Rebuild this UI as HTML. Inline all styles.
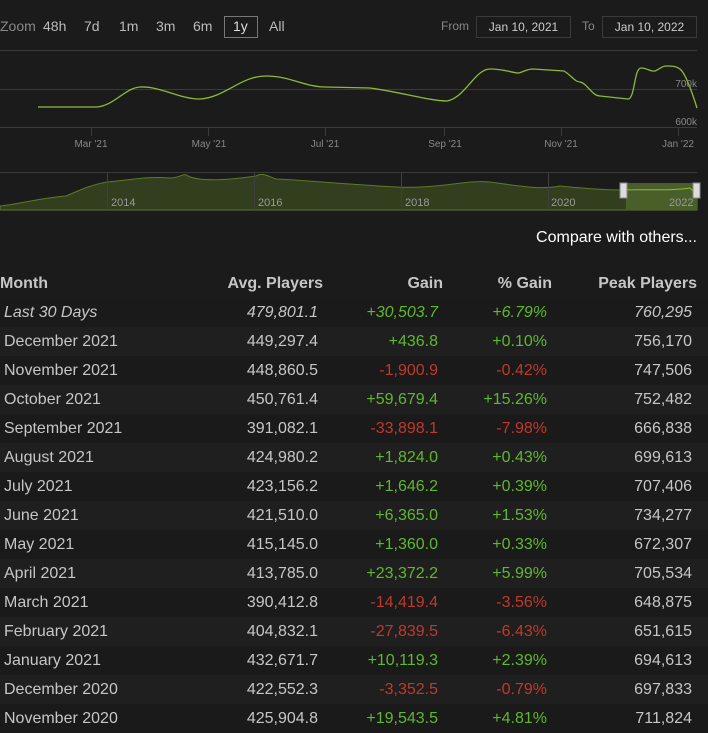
<!DOCTYPE html>
<html><head><style>
*{margin:0;padding:0;box-sizing:border-box}
body{width:708px;height:731px;background:#1b1b1b;font-family:"Liberation Sans",sans-serif;overflow:hidden;position:relative;color:#c6c6c6}
.a{position:absolute;white-space:nowrap}
.zb{font-size:14px;color:#bbb;top:18px}
.db{position:absolute;top:16px;height:22px;border:1px solid #3a3a3a;font-size:12px;color:#ccc;text-align:center;line-height:20px}
table{position:absolute;top:270px;left:0;width:708px;border-collapse:collapse;font-size:16px}
td,th{height:29px;padding:0;white-space:nowrap}
th{height:28px;font-weight:bold;color:#c6c6c6;text-align:right;background:#1b1b1b}
tr:nth-child(odd) td{background:#1f1f1f}
tr:nth-child(even) td{background:#1a1a1a}
td{text-align:right;color:#c6c6c6;padding-right:5px!important}
td.m{text-align:left;padding-left:4px}
.g{color:#5fb82e}.r{color:#c0392b}
i{font-style:italic}
</style></head><body>
<div class="a zb" style="left:0;color:#888">Zoom</div>
<div class="a zb" style="left:43px">48h</div>
<div class="a zb" style="left:84px">7d</div>
<div class="a zb" style="left:119px">1m</div>
<div class="a zb" style="left:156px">3m</div>
<div class="a zb" style="left:193px">6m</div>
<div class="a" style="left:224px;top:16px;width:34px;height:22px;border:1px solid #777;"></div>
<div class="a zb" style="left:233px;color:#ddd">1y</div>
<div class="a zb" style="left:269px">All</div>
<div class="a" style="left:441px;top:19px;font-size:12px;color:#888">From</div>
<div class="db" style="left:476px;width:95px">Jan 10, 2021</div>
<div class="a" style="left:582px;top:19px;font-size:12px;color:#888">To</div>
<div class="db" style="left:602px;width:95px">Jan 10, 2022</div>
<svg class="a" style="left:0;top:0" width="708" height="250">
<g stroke="#3a3a3a" stroke-width="1">
<line x1="0" y1="50.5" x2="697" y2="50.5"/><line x1="0" y1="89.5" x2="697" y2="89.5"/><line x1="0" y1="127.5" x2="697" y2="127.5"/>
<line x1="91.5" y1="128" x2="91.5" y2="136"/><line x1="208.5" y1="128" x2="208.5" y2="136"/><line x1="325.5" y1="128" x2="325.5" y2="136"/><line x1="444.5" y1="128" x2="444.5" y2="136"/><line x1="561.5" y1="128" x2="561.5" y2="136"/><line x1="678.5" y1="128" x2="678.5" y2="136"/>
</g>
<path d="M38,107 L97,107 C115,105 125,88 140,87 C160,86 180,99 199,99 C225,98 240,76 266,76 C290,76 305,87 325,87 L370,88 C400,92 430,101 447,101 C465,98 475,69 490,69 C505,69 512,73 519,73 C525,71 528,69 533,69 L564,71 C572,76 575,82 580,82 C587,83 592,96 600,96 L628,99 C635,99 634,68 641,68 C648,68 650,72 655,71 C660,69 662,66 666,66 C672,66 677,66 681,70 C686,75 692,92 697,108" fill="none" stroke="#8fb83a" stroke-width="1.3"/>
<g fill="#888" font-size="10" font-family="Liberation Sans" text-anchor="middle">
<text x="91" y="147">Mar '21</text><text x="209" y="147">May '21</text><text x="325" y="147">Jul '21</text><text x="445" y="147">Sep '21</text><text x="561" y="147">Nov '21</text><text x="678" y="147">Jan '22</text>
<text x="697" y="87" text-anchor="end">700k</text><text x="697" y="125" text-anchor="end">600k</text>
</g>
<line x1="0" y1="172.5" x2="697" y2="172.5" stroke="#3a3a3a"/>
<path d="M0,210 L0,206 C20,204 40,198 66,196 C80,190 90,185 107,182 C130,180 150,176 170,178 C180,178 184,172 188,176 C200,182 230,180 256,176 C262,172 268,176 276,179 C300,180 320,182 350,184 C380,186 400,188 420,187 C450,186 470,180 490,182 C520,186 540,190 560,186 C580,188 600,190 626,190 L697,190 L697,210 Z" fill="#333e1f" stroke="#5a7a28" stroke-width="1"/>
<rect x="626" y="183" width="71" height="27" fill="#4a5e2a"/>
<path d="M626,190 C650,189 670,191 690,188 L697,195" stroke="#8fb83a" fill="none"/>
<g stroke="#3f3f3f"><line x1="107.5" y1="173" x2="107.5" y2="210"/><line x1="254.5" y1="173" x2="254.5" y2="210"/><line x1="401.5" y1="173" x2="401.5" y2="210"/><line x1="548.5" y1="173" x2="548.5" y2="210"/></g>
<g fill="#999" font-size="11" font-family="Liberation Sans"><text x="111" y="206">2014</text><text x="258" y="206">2016</text><text x="405" y="206">2018</text><text x="551" y="206">2020</text><text x="669" y="206">2022</text></g>
<rect x="620" y="183" width="7" height="15" fill="#ddd" stroke="#888"/>
<rect x="693" y="183" width="7" height="15" fill="#ddd" stroke="#888"/>
<rect x="0" y="250" width="708" height="20" fill="#131313"/>
</svg>
<div class="a" style="right:11px;top:229px;font-size:16px;color:#fff">Compare with others...</div>
<table>
<tr><th style="text-align:left;width:180px">Month</th><th style="width:143px">Avg. Players</th><th style="width:120px">Gain</th><th style="width:109px">% Gain</th><th style="width:145px">Peak Players</th><th></th></tr>
<tr><td class="m"><i>Last 30 Days</i></td><td><i>479,801.1</i></td><td class="g"><i>+30,503.7</i></td><td class="g"><i>+6.79%</i></td><td><i>760,295</i></td><td></td></tr>
<tr><td class="m">December 2021</td><td>449,297.4</td><td class="g">+436.8</td><td class="g">+0.10%</td><td>756,170</td><td></td></tr>
<tr><td class="m">November 2021</td><td>448,860.5</td><td class="r">-1,900.9</td><td class="r">-0.42%</td><td>747,506</td><td></td></tr>
<tr><td class="m">October 2021</td><td>450,761.4</td><td class="g">+59,679.4</td><td class="g">+15.26%</td><td>752,482</td><td></td></tr>
<tr><td class="m">September 2021</td><td>391,082.1</td><td class="r">-33,898.1</td><td class="r">-7.98%</td><td>666,838</td><td></td></tr>
<tr><td class="m">August 2021</td><td>424,980.2</td><td class="g">+1,824.0</td><td class="g">+0.43%</td><td>699,613</td><td></td></tr>
<tr><td class="m">July 2021</td><td>423,156.2</td><td class="g">+1,646.2</td><td class="g">+0.39%</td><td>707,406</td><td></td></tr>
<tr><td class="m">June 2021</td><td>421,510.0</td><td class="g">+6,365.0</td><td class="g">+1.53%</td><td>734,277</td><td></td></tr>
<tr><td class="m">May 2021</td><td>415,145.0</td><td class="g">+1,360.0</td><td class="g">+0.33%</td><td>672,307</td><td></td></tr>
<tr><td class="m">April 2021</td><td>413,785.0</td><td class="g">+23,372.2</td><td class="g">+5.99%</td><td>705,534</td><td></td></tr>
<tr><td class="m">March 2021</td><td>390,412.8</td><td class="r">-14,419.4</td><td class="r">-3.56%</td><td>648,875</td><td></td></tr>
<tr><td class="m">February 2021</td><td>404,832.1</td><td class="r">-27,839.5</td><td class="r">-6.43%</td><td>651,615</td><td></td></tr>
<tr><td class="m">January 2021</td><td>432,671.7</td><td class="g">+10,119.3</td><td class="g">+2.39%</td><td>694,613</td><td></td></tr>
<tr><td class="m">December 2020</td><td>422,552.3</td><td class="r">-3,352.5</td><td class="r">-0.79%</td><td>697,833</td><td></td></tr>
<tr><td class="m">November 2020</td><td>425,904.8</td><td class="g">+19,543.5</td><td class="g">+4.81%</td><td>711,824</td><td></td></tr>
</table>
</body></html>
